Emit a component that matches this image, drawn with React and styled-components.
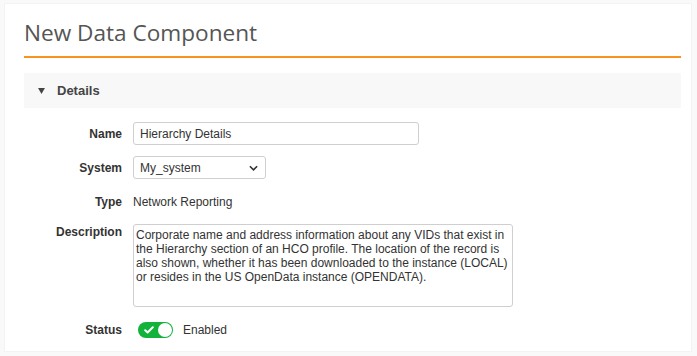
import styled, { createGlobalStyle } from "styled-components";

const GlobalStyle = createGlobalStyle`
  html, body {
    margin: 0;
    padding: 0;
    background-color: #f9f9f9;
  }
  * {
    box-sizing: border-box;
  }
`;

export default function App() {
  return (
    <>
      <GlobalStyle />
      <Card>
        <Title>New Data Component</Title>
        <Section>
          <SectionHeader>
            <Caret viewBox="0 0 8 7">
              <path d="M0 0h8L4 7z" fill="#444" />
            </Caret>
            <span>Details</span>
          </SectionHeader>
          <Form>
            <Label>Name</Label>
            <Field>
              <TextInput defaultValue="Hierarchy Details" />
            </Field>

            <Label>System</Label>
            <Field>
              <SelectWrap>
                <Select defaultValue="My_system">
                  <option>My_system</option>
                </Select>
                <Chevron viewBox="0 0 10 6">
                  <path d="M1 1l4 4 4-4" fill="none" stroke="#333" strokeWidth="1.8" />
                </Chevron>
              </SelectWrap>
            </Field>

            <Label>Type</Label>
            <Field>
              <Value>Network Reporting</Value>
            </Field>

            <Label $top>Description</Label>
            <Field>
              <TextArea
                defaultValue="Corporate name and address information about any VIDs that exist in the Hierarchy section of an HCO profile. The location of the record is also shown, whether it has been downloaded to the instance (LOCAL) or resides in the US OpenData instance (OPENDATA)."
              />
            </Field>

            <Label>Status</Label>
            <Field>
              <Toggle>
                <svg width="10" height="8" viewBox="0 0 10 8">
                  <path d="M1.2 4.2l2.4 2.3L8.8 1.3" fill="none" stroke="#fff" strokeWidth="2" strokeLinecap="round" strokeLinejoin="round" />
                </svg>
                <Knob />
              </Toggle>
              <Value>Enabled</Value>
            </Field>
          </Form>
        </Section>
      </Card>
    </>
  );
}

const Card = styled.div`
  margin: 3px 5px 0 4px;
  width: 688px;
  height: 349px;
  background-color: #ffffff;
  border: 1px solid #f3f3f3;
  padding: 0 10px 0 19px;
`;

const Title = styled.h1`
  margin: 0;
  padding-top: 13px;
  height: 54px;
  font-family: "Open Sans", "Noto Sans", sans-serif;
  font-weight: 400;
  font-size: 22.6px;
  line-height: 31px;
  color: #555555;
  border-bottom: 2px solid #f7941d;
`;

const Section = styled.div`
  margin-top: 15px;
`;

const SectionHeader = styled.div`
  display: flex;
  align-items: center;
  height: 35px;
  background-color: #f8f8f8;
  padding-left: 14px;
  font-family: "Liberation Sans", Arial, sans-serif;
  font-size: 13px;
  font-weight: bold;
  color: #444444;
`;

const Caret = styled.svg`
  width: 7px;
  height: 6px;
  margin-right: 12px;
`;

const Form = styled.div`
  display: grid;
  grid-template-columns: 98px 1fr;
  column-gap: 11px;
  row-gap: 11px;
  padding-top: 14px;
  font-family: "Liberation Sans", Arial, sans-serif;
  font-size: 12px;
  color: #333333;
`;

const Label = styled.div`
  text-align: right;
  font-weight: bold;
  color: #333333;
  display: flex;
  justify-content: flex-end;
  align-items: ${(p) => (p.$top ? "flex-start" : "center")};
  padding-top: ${(p) => (p.$top ? "1px" : "0")};
  min-height: 23px;
  line-height: 14px;
`;

const Field = styled.div`
  display: flex;
  align-items: center;
  min-height: 23px;
  gap: 10px;
`;

const TextInput = styled.input`
  width: 286px;
  height: 23px;
  border: 1px solid #cfcfcf;
  border-radius: 3px;
  padding: 0 6px;
  font-family: "Liberation Sans", Arial, sans-serif;
  font-size: 12px;
  color: #333333;
  outline: none;
`;

const SelectWrap = styled.div`
  position: relative;
  width: 133px;
  height: 23px;
`;

const Select = styled.select`
  appearance: none;
  width: 100%;
  height: 100%;
  border: 1px solid #cfcfcf;
  border-radius: 3px;
  background-color: #ffffff;
  padding: 0 6px;
  font-family: "Liberation Sans", Arial, sans-serif;
  font-size: 12px;
  color: #333333;
  outline: none;
`;

const Chevron = styled.svg`
  position: absolute;
  right: 8px;
  top: 9px;
  width: 9px;
  height: 6px;
  pointer-events: none;
`;

const Value = styled.span`
  color: #333333;
`;

const TextArea = styled.textarea`
  width: 380px;
  height: 83px;
  border: 1px solid #cfcfcf;
  border-radius: 3px;
  padding: 3px 1px 3px 2px;
  font-family: "Liberation Sans", Arial, sans-serif;
  font-size: 12px;
  line-height: 14px;
  color: #333333;
  resize: none;
  outline: none;
  overflow: hidden;
`;

const Toggle = styled.div`
  display: flex;
  align-items: center;
  justify-content: space-between;
  margin-left: 5px;
  width: 35px;
  height: 16px;
  border-radius: 8px;
  background-color: #13b23a;
  padding: 0 1px 0 6px;
`;

const Knob = styled.span`
  width: 14px;
  height: 14px;
  border-radius: 50%;
  background-color: #ffffff;
`;
